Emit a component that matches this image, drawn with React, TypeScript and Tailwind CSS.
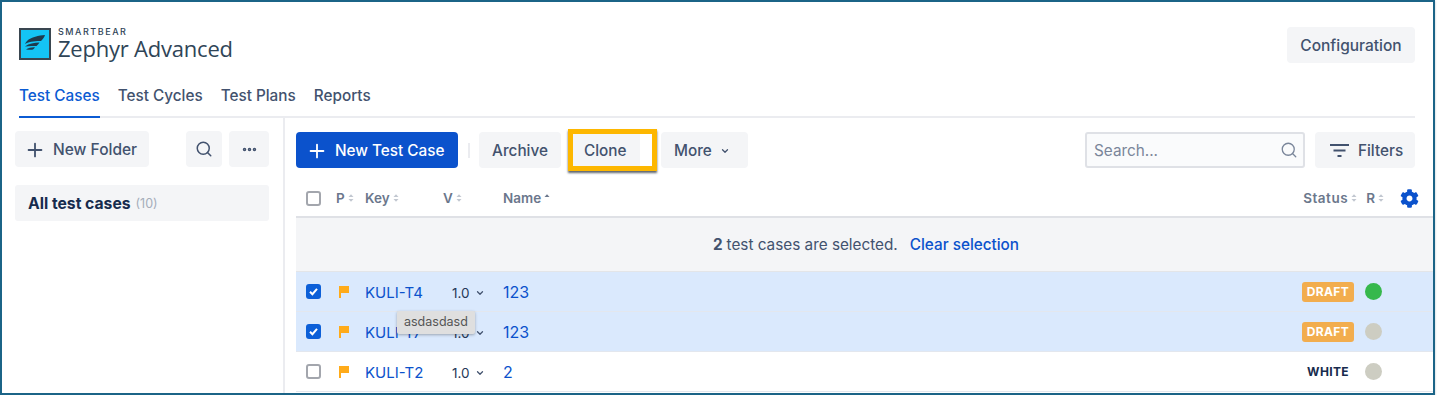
import { ChevronDown, Ellipsis, Plus, Search } from 'lucide-react'
import { FaCog } from 'react-icons/fa'

const rows = [
  { key: 'KULI-T4', name: '123', selected: true, status: 'DRAFT', dot: 'bg-[#36b84c]' },
  { key: 'KULI-T7', name: '123', selected: true, status: 'DRAFT', dot: 'bg-[#cdcdc2]' },
  { key: 'KULI-T2', name: '2', selected: false, status: 'WHITE', dot: 'bg-[#cdcdc2]' },
]

const SortIcon = ({ asc = false }: { asc?: boolean }) => (
  <svg width="6" height="10" viewBox="0 0 6 10" className="ml-[3px]">
    <path d="M0.5 4 L3 1.2 L5.5 4 Z" fill={asc ? '#6b778c' : '#c1c7d0'} />
    {!asc && <path d="M0.5 6 L3 8.8 L5.5 6 Z" fill="#c1c7d0" />}
  </svg>
)

const HeaderCell = ({ label, asc, className }: { label: string; asc?: boolean; className?: string }) => (
  <div className={`flex items-center text-[13.5px] font-semibold text-[#6b778c] ${className ?? ''}`}>
    {label}
    <SortIcon asc={asc} />
  </div>
)

const Checkbox = ({ checked }: { checked: boolean }) =>
  checked ? (
    <span className="flex h-[15px] w-[15px] items-center justify-center rounded-[3px] bg-[#0b5fd8]">
      <svg width="11" height="11" viewBox="0 0 11 11" fill="none">
        <path d="M2 5.8 L4.4 8.2 L9 2.8" stroke="#fff" strokeWidth="2" />
      </svg>
    </span>
  ) : (
    <span className="block h-[15px] w-[15px] rounded-[3px] border-2 border-[#a3a6ad] bg-white" />
  )

const Flag = () => (
  <svg width="10" height="12" viewBox="0 0 10 12">
    <path d="M0 0 H10 V7 H2 V12 H0 Z" fill="#ffab1a" />
  </svg>
)

const Logo = () => (
  <div className="flex h-8 w-8 items-center justify-center border-2 border-[#3a4650] bg-[#14c4f5]">
    <svg width="22" height="20" viewBox="0 0 22 20">
      <path d="M21 1 C15 1.5 7 3 3 7 C2 8 1.5 9 1 10 C6 7 13 7 17 7 C19 5 20.5 3 21 1 Z" fill="#1f3a4d" />
      <path d="M15.5 8.5 C10 8.5 5 9.5 1 12.5 C5.5 11.5 10 12 12.5 12 C13.8 11 14.8 9.8 15.5 8.5 Z" fill="#1f3a4d" />
      <path d="M11 13.2 C8 13 4.5 13.6 2 15.5 C4.5 15.8 7.5 16 9 15.6 C9.8 15 10.5 14.2 11 13.2 Z" fill="#1f3a4d" />
    </svg>
  </div>
)

const App = () => {
  return (
    <div className="relative h-[395px] w-[1435px] overflow-hidden border-2 border-[#1b6487] bg-white font-['Inter',sans-serif] text-[#42526e] shadow-[0_1px_2px_rgba(60,80,100,0.35)]">
      {/* header */}
      <div className="ml-[17px] mr-[18px] flex items-start justify-between pt-[25px]">
        <div className="flex items-center gap-[7px]">
          <Logo />
          <div className="text-[#2f4557]">
            <div className="text-[9px] font-medium leading-[9px] tracking-[0.17em]">SMARTBEAR</div>
            <div className="font-['Open_Sans',sans-serif] text-[22px] leading-[24px] tracking-[-0.01em]">Zephyr Advanced</div>
          </div>
        </div>
        <button type="button" className="h-9 w-[128px] rounded-[4px] bg-[#f4f5f7] pt-[2px] text-[15.5px] font-medium">
          Configuration
        </button>
      </div>

      {/* tabs */}
      <div className="ml-[17px] mr-[18px] mt-[16px] flex h-[39px] gap-[18px] border-b-2 border-[#ebecf0] text-[15.3px] font-medium">
        <div className="-mb-[2px] flex items-center border-b-2 border-[#0b5bd3] pb-[3px] text-[#0b5bd3]">Test Cases</div>
        <div className="flex items-center pb-[3px]">Test Cycles</div>
        <div className="flex items-center pb-[3px]">Test Plans</div>
        <div className="flex items-center pb-[3px]">Reports</div>
      </div>

      <div className="flex">
        {/* folders */}
        <aside className="ml-[13px] h-[280px] w-[270px] shrink-0 border-r-2 border-[#ebecf0] pr-[14px] pt-[13px]">
          <div className="flex items-center">
            <button type="button" className="flex h-9 w-[134px] items-center gap-[7px] rounded-[4px] bg-[#f4f5f7] pl-[9px] pt-[2px] text-[15.5px] font-medium">
              <Plus size={22} strokeWidth={2} />
              New Folder
            </button>
            <button type="button" className="ml-[37px] flex h-9 w-9 items-center justify-center rounded-[4px] bg-[#f4f5f7]">
              <Search size={18} strokeWidth={2} />
            </button>
            <button type="button" className="ml-[7px] flex h-9 w-[40px] items-center justify-center rounded-[4px] bg-[#f4f5f7]">
              <Ellipsis size={17} strokeWidth={3} />
            </button>
          </div>
          <div className="mt-[18px] flex h-9 items-center gap-[5px] rounded-[3px] bg-[#f4f5f7] pl-[13px] pt-[2px]">
            <span className="text-[15.7px] font-bold text-[#172b4d]">All test cases</span>
            <span className="text-[12.5px] text-[#a5adba]">(10)</span>
          </div>
        </aside>

        {/* table */}
        <main className="min-w-0 flex-1 pl-[11px] pt-[14px]">
          <div className="mr-[18px] flex items-center">
            <button type="button" className="flex h-9 w-[162px] items-center gap-[7px] rounded-[4px] bg-[#0b52cc] pl-[10px] pt-[2px] text-[15.3px] font-medium text-white">
              <Plus size={22} strokeWidth={2} />
              New Test Case
            </button>
            <span className="ml-[10px] h-[15px] w-[2px] bg-[#ebecf0]" />
            <button type="button" className="ml-[9px] h-9 w-[82px] rounded-[4px] bg-[#f4f5f7] pt-[2px] text-[15.3px] font-medium">
              Archive
            </button>
            <div className="-my-[3px] ml-[7px] h-[42px] w-[89px] border-[5px] border-[#fdb700] bg-white shadow-[0_2px_2px_rgba(40,50,60,0.75)]">
              <button type="button" className="h-full w-[67px] bg-[#f4f5f7] pl-[11px] pt-[2px] text-left text-[15.3px] font-medium">
                Clone
              </button>
            </div>
            <button type="button" className="ml-[4px] flex h-9 w-[87px] items-center gap-[8px] rounded-[4px] bg-[#f4f5f7] pl-[13px] pt-[2px] text-[15.3px] font-medium">
              More
              <ChevronDown size={10} strokeWidth={3} />
            </button>
            <div className="ml-auto flex h-9 w-[220px] items-center justify-between rounded-[3px] border-2 border-[#dfe1e6] bg-[#fafbfc] pl-[7px] pr-[5px] text-[15.3px] text-[#7a869a]">
              <span className="pt-[2px]">Search...</span>
              <Search size={18} strokeWidth={1.75} className="text-[#7a869a]" />
            </div>
            <button type="button" className="ml-[10px] flex h-9 w-[100px] items-center gap-[8px] rounded-[4px] bg-[#f4f5f7] pl-[15px] pt-[2px] text-[15.3px] font-medium">
              <svg width="20" height="14" viewBox="0 0 20 14" fill="#42526e">
                <rect x="0" y="0" width="19" height="2" />
                <rect x="3.5" y="5.5" width="12" height="2" />
                <rect x="7.5" y="11" width="4" height="2" />
              </svg>
              Filters
            </button>
          </div>

          <div className="mt-[13px] flex h-[37px] items-center border-b-2 border-[#dfe1e6] pb-[1px] pl-[10px]">
            <Checkbox checked={false} />
            <HeaderCell label="P" className="ml-[15px] w-[29px]" />
            <HeaderCell label="Key" className="w-[78px]" />
            <HeaderCell label="V" className="w-[60px]" />
            <HeaderCell label="Name" asc />
            <HeaderCell label="Status" className="ml-auto tracking-[0.04em]" />
            <HeaderCell label="R" className="ml-[9px]" />
            <FaCog size={19} color="#0b52cc" className="ml-[16px] mr-[14px]" />
          </div>

          <div className="flex h-[53px] items-center justify-center bg-[#f4f5f7] pl-[3px] pt-[2px] text-[15.3px]">
            <span className="font-bold">2</span>
            <span className="ml-[4px]">test cases are selected.</span>
            <span className="ml-[12px] font-medium text-[#0b52cc]">Clear selection</span>
          </div>

          <div className="border-t border-[#e3e5e8]">
            {rows.map(row => (
              <div
                key={row.key}
                className={`flex h-[40px] items-center border-b border-[#e3e7ee] pl-[10px] ${row.selected ? 'bg-[#dae9fd]' : 'bg-white'}`}
              >
                <Checkbox checked={row.selected} />
                <span className="ml-[18px] flex w-[26px]"><Flag /></span>
                <span className="w-[87px] pt-[3px] text-[15px] text-[#0b52cc]">{row.key}</span>
                <span className="flex w-[51px] items-center gap-[5px] pt-[3px] text-[13.5px] text-[#253858]">
                  1.0
                  <ChevronDown size={10} strokeWidth={3} className="text-[#42526e]" />
                </span>
                <span className="pt-[1px] text-[16px] text-[#0b52cc]">{row.name}</span>
                {row.status === 'DRAFT' ? (
                  <span className="ml-auto rounded-[3px] bg-[#f2ad4e] px-[5px] py-px text-[12px] font-bold tracking-[0.03em] text-white">
                    {row.status}
                  </span>
                ) : (
                  <span className="ml-auto px-[5px] py-px text-[12px] font-bold tracking-[0.03em] text-[#172b4d]">
                    {row.status}
                  </span>
                )}
                <span className={`ml-[11px] mr-[51px] h-[17px] w-[17px] rounded-full ${row.dot}`} />
              </div>
            ))}
          </div>
        </main>
      </div>

      {/* tooltip */}
      <div className="absolute left-[395px] top-[309px] rounded-[2px] bg-[#dfdfdf] px-[7px] py-[2px] text-[12.5px] text-[#555] shadow-[0_1px_3px_rgba(0,0,0,0.3)]">
        asdasdasd
      </div>
    </div>
  )
}

export default App
